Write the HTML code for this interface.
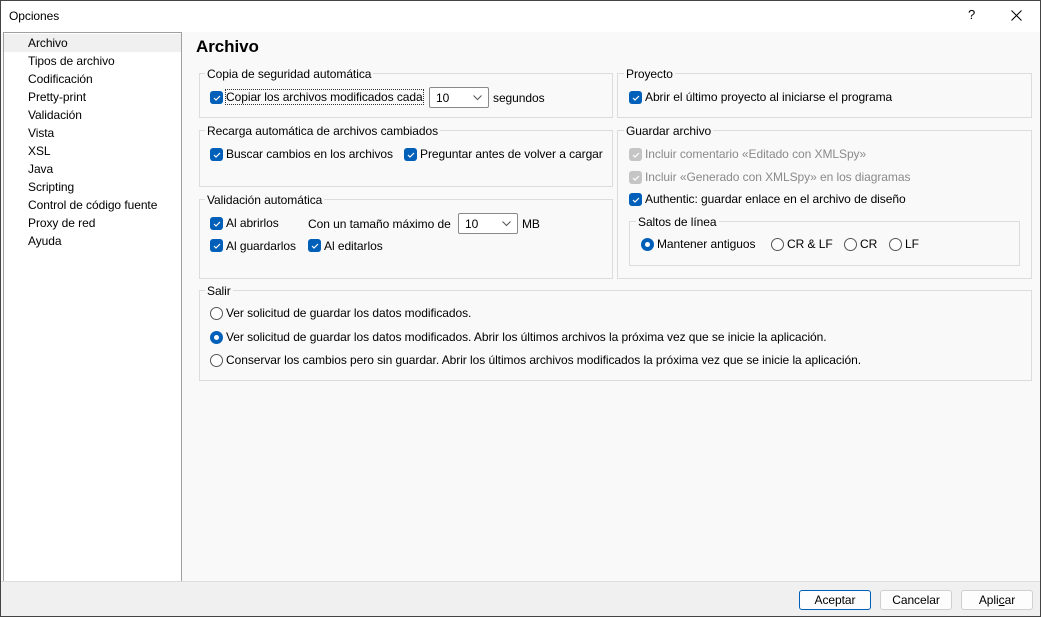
<!DOCTYPE html>
<html><head><meta charset="utf-8"><style>
*{margin:0;padding:0;box-sizing:border-box}
body{width:1041px;height:617px;overflow:hidden;font-family:"Liberation Sans",sans-serif;font-size:12px;letter-spacing:-0.06px;color:#000;background:#f9f9f9;position:relative}
.win{position:absolute;left:0;top:0;width:1041px;height:617px;border:1px solid #444;}
.a{position:absolute;white-space:nowrap;line-height:14px}
.g{position:absolute;border:1px solid #dcdcdc}
.lg{position:absolute;background:#f9f9f9;padding:0 2px;line-height:14px;white-space:nowrap}
.cb{position:absolute;width:13px;height:13px;border-radius:3px;background:#005fb8}
.cb svg{position:absolute;left:1px;top:1px}
.cb.d{background:#c5c5c5}
.rb{position:absolute;width:13px;height:13px;border-radius:50%;border:1px solid #555;background:#fff}
.rb.on{border:none;background:#005fb8}
.rb.on:after{content:"";position:absolute;left:4px;top:4px;width:5px;height:5px;border-radius:50%;background:#fff}
.sel{position:absolute;height:21px;border:1px solid #8a8a8a;background:#fff;border-radius:2px}
.sel span{position:absolute;left:6px;top:3px}
.sel svg{position:absolute;right:6px;top:7px}
.btn{position:absolute;top:590px;height:20px;border:1px solid #d0d0d0;border-radius:3px;background:#fdfdfd;text-align:center;line-height:18px}
</style></head><body>
<div class="win"></div>
<div style="position:absolute;left:1px;top:1px;width:1039px;height:31px;background:#fff"></div>
<div class="a" style="left:9px;top:9px">Opciones</div>
<div class="a" style="left:968px;top:8px;font-size:13px">?</div>
<svg style="position:absolute;left:1011px;top:10px" width="11" height="11"><path d="M0.5 0.5L10.5 10.5M10.5 0.5L0.5 10.5" stroke="#000" stroke-width="1"/></svg>
<!-- sidebar -->
<div style="position:absolute;left:3px;top:32px;width:179px;height:549px;background:#fff;border:1px solid #a0a0a0;border-bottom:none"></div>
<div style="position:absolute;left:4px;top:34px;width:177px;height:18px;background:#f0f0f0"></div>
<div class="a" style="left:28px;top:36px">Archivo</div>
<div class="a" style="left:28px;top:54px">Tipos de archivo</div>
<div class="a" style="left:28px;top:72px">Codificación</div>
<div class="a" style="left:28px;top:90px">Pretty-print</div>
<div class="a" style="left:28px;top:108px">Validación</div>
<div class="a" style="left:28px;top:126px">Vista</div>
<div class="a" style="left:28px;top:144px">XSL</div>
<div class="a" style="left:28px;top:162px">Java</div>
<div class="a" style="left:28px;top:180px">Scripting</div>
<div class="a" style="left:28px;top:198px">Control de código fuente</div>
<div class="a" style="left:28px;top:216px">Proxy de red</div>
<div class="a" style="left:28px;top:234px">Ayuda</div>
<div class="a" style="left:196px;top:37px;font-size:17px;font-weight:bold;line-height:20px">Archivo</div>

<svg width="0" height="0" style="position:absolute"><defs><path id="ck" d="M3 6l2 2 4-4" fill="none" stroke="#fff" stroke-width="1.2"/></defs></svg>

<!-- Copia -->
<div class="g" style="left:199px;top:73px;width:414px;height:45px"></div>
<div class="lg" style="left:205px;top:67px">Copia de seguridad automática</div>
<div class="cb" style="left:210px;top:91px"><svg width="11" height="11"><use href="#ck"/></svg></div>
<div class="a" style="left:226px;top:90px;outline:1px dotted #333;outline-offset:0">Copiar los archivos modificados cada</div>
<div class="sel" style="left:429px;top:87px;width:60px"><span>10</span><svg width="9" height="6"><path d="M0.5 0.5L4.5 4.5L8.5 0.5" fill="none" stroke="#555"/></svg></div>
<div class="a" style="left:493px;top:91px">segundos</div>

<!-- Recarga -->
<div class="g" style="left:199px;top:130px;width:414px;height:57px"></div>
<div class="lg" style="left:205px;top:124px">Recarga automática de archivos cambiados</div>
<div class="cb" style="left:210px;top:148px"><svg width="11" height="11"><use href="#ck"/></svg></div>
<div class="a" style="left:226px;top:147px">Buscar cambios en los archivos</div>
<div class="cb" style="left:404px;top:148px"><svg width="11" height="11"><use href="#ck"/></svg></div>
<div class="a" style="left:420px;top:147px">Preguntar antes de volver a cargar</div>

<!-- Validacion -->
<div class="g" style="left:199px;top:199px;width:414px;height:80px"></div>
<div class="lg" style="left:205px;top:193px">Validación automática</div>
<div class="cb" style="left:210px;top:217px"><svg width="11" height="11"><use href="#ck"/></svg></div>
<div class="a" style="left:226px;top:216px">Al abrirlos</div>
<div class="a" style="left:308px;top:217px">Con un tamaño máximo de</div>
<div class="sel" style="left:458px;top:213px;width:60px"><span>10</span><svg width="9" height="6"><path d="M0.5 0.5L4.5 4.5L8.5 0.5" fill="none" stroke="#555"/></svg></div>
<div class="a" style="left:522px;top:217px">MB</div>
<div class="cb" style="left:210px;top:239px"><svg width="11" height="11"><use href="#ck"/></svg></div>
<div class="a" style="left:226px;top:239px">Al guardarlos</div>
<div class="cb" style="left:308px;top:239px"><svg width="11" height="11"><use href="#ck"/></svg></div>
<div class="a" style="left:324px;top:239px">Al editarlos</div>

<!-- Proyecto -->
<div class="g" style="left:617px;top:73px;width:415px;height:45px"></div>
<div class="lg" style="left:624px;top:67px">Proyecto</div>
<div class="cb" style="left:629px;top:91px"><svg width="11" height="11"><use href="#ck"/></svg></div>
<div class="a" style="left:645px;top:90px">Abrir el último proyecto al iniciarse el programa</div>

<!-- Guardar -->
<div class="g" style="left:617px;top:130px;width:415px;height:149px"></div>
<div class="lg" style="left:624px;top:124px">Guardar archivo</div>
<div class="cb d" style="left:629px;top:148px"><svg width="11" height="11"><use href="#ck"/></svg></div>
<div class="a" style="left:645px;top:147px;color:#8a8a8a">Incluir comentario «Editado con XMLSpy»</div>
<div class="cb d" style="left:629px;top:171px"><svg width="11" height="11"><use href="#ck"/></svg></div>
<div class="a" style="left:645px;top:170px;color:#8a8a8a">Incluir «Generado con XMLSpy» en los diagramas</div>
<div class="cb" style="left:629px;top:193px"><svg width="11" height="11"><use href="#ck"/></svg></div>
<div class="a" style="left:645px;top:192px">Authentic: guardar enlace en el archivo de diseño</div>
<div class="g" style="left:629px;top:221px;width:391px;height:45px"></div>
<div class="lg" style="left:636px;top:215px">Saltos de línea</div>
<div class="rb on" style="left:641px;top:238px"></div>
<div class="a" style="left:657px;top:237px">Mantener antiguos</div>
<div class="rb" style="left:771px;top:238px"></div>
<div class="a" style="left:787px;top:237px">CR &amp; LF</div>
<div class="rb" style="left:844px;top:238px"></div>
<div class="a" style="left:860px;top:237px">CR</div>
<div class="rb" style="left:889px;top:238px"></div>
<div class="a" style="left:905px;top:237px">LF</div>

<!-- Salir -->
<div class="g" style="left:199px;top:290px;width:833px;height:91px"></div>
<div class="lg" style="left:205px;top:284px">Salir</div>
<div class="rb" style="left:210px;top:307px"></div>
<div class="a" style="left:226px;top:306px">Ver solicitud de guardar los datos modificados.</div>
<div class="rb on" style="left:210px;top:331px"></div>
<div class="a" style="left:226px;top:330px">Ver solicitud de guardar los datos modificados. Abrir los últimos archivos la próxima vez que se inicie la aplicación.</div>
<div class="rb" style="left:210px;top:354px"></div>
<div class="a" style="left:226px;top:353px">Conservar los cambios pero sin guardar. Abrir los últimos archivos modificados la próxima vez que se inicie la aplicación.</div>

<!-- bottom -->
<div style="position:absolute;left:1px;top:581px;width:1039px;height:35px;background:#f0f0f0;border-top:1px solid #dcdcdc"></div>
<div class="btn" style="left:799px;width:72px;border:1px solid #005fb8">Aceptar</div>
<div class="btn" style="left:880px;width:72px">Cancelar</div>
<div class="btn" style="left:961px;width:72px">Apli<u>c</u>ar</div>
</body></html>
